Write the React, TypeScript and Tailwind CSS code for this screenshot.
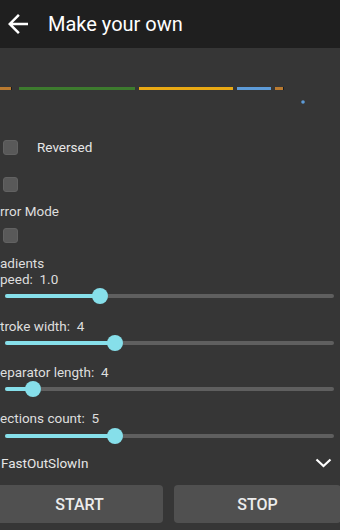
import React from "react";

const font = { fontFamily: "Roboto, 'Noto Sans', sans-serif" };

function Checkbox({ className = "" }: { className?: string }) {
  return (
    <div
      className={`ml-[3px] h-[15px] w-[15px] rounded-[3px] border border-[#626262] bg-[#595959] ${className}`}
    />
  );
}

function Slider({ thumb, className = "" }: { thumb: number; className?: string }) {
  // thumb = x position of the thumb centre on the page
  const active = thumb - 5;
  return (
    <div className={`relative ml-[5px] h-4 w-[329px] ${className}`}>
      <div className="absolute inset-x-0 top-[6px] h-[4px] rounded-full bg-[#5f5f5f]" />
      <div
        className="absolute left-0 top-[6px] h-[4px] rounded-l-full bg-[#86dfea]"
        style={{ width: active }}
      />
      <div
        className="absolute top-0 h-4 w-4 rounded-full bg-[#86dfea]"
        style={{ left: active - 8 }}
      />
    </div>
  );
}

function Label({ children, className = "" }: { children: React.ReactNode; className?: string }) {
  return (
    <div className={`h-4 whitespace-pre text-[13.5px] leading-4 text-[#dedede] ${className}`}>
      {children}
    </div>
  );
}

export default function App() {
  return (
    <div className="h-[530px] w-[340px] overflow-hidden bg-[#363636]" style={font}>
      <header className="flex h-12 items-center bg-[#1f1f1f]">
        <svg width="30" height="30" viewBox="0 0 24 24" className="ml-[3px]">
          <path
            d="M20 11H7.83l5.59-5.59L12 4l-8 8 8 8 1.41-1.41L7.83 13H20v-2z"
            fill="#ffffff"
          />
        </svg>
        <h1 className="ml-[15px] text-[20px] font-normal text-white">Make your own</h1>
      </header>

      <svg width="340" height="84" className="block">
        <rect x="0" y="39" width="11" height="3" fill="#b97a30" />
        <rect x="11" y="39" width="1" height="3" fill="#1c1c1c" />
        <rect x="19" y="39" width="116" height="3" fill="#3d7b2e" />
        <rect x="139" y="39" width="94" height="3" fill="#e9a914" />
        <rect x="237" y="39" width="34" height="3" fill="#5d9bd8" />
        <rect x="275" y="39" width="8" height="3" fill="#b97a30" />
        <rect x="283" y="39" width="1" height="3" fill="#1c1c1c" />
        <circle cx="303" cy="54" r="1.8" fill="#5d9bd8" />
      </svg>

      <div className="flex h-[30px] items-center">
        <Checkbox />
        <span className="ml-[19px] text-[13.5px] text-[#e6e6e6]">Reversed</span>
      </div>

      <Checkbox className="mt-[15px]" />
      <Label className="mt-[11px]">rror Mode</Label>
      <Checkbox className="mt-[9px]" />

      <Label className="mt-[12px]">adients</Label>
      <Label>{"peed:  1.0"}</Label>
      <Slider thumb={100} className="mt-[1px]" />

      <Label className="mt-[14px]">{"troke width:  4"}</Label>
      <Slider thumb={115} className="mt-[1px]" />

      <Label className="mt-[13px]">{"eparator length:  4"}</Label>
      <Slider thumb={33} className="mt-[1px]" />

      <Label className="mt-[13px]">{"ections count:  5"}</Label>
      <Slider thumb={115} className="mt-[2px]" />

      <div className="mt-[9px] flex h-5 items-center justify-between">
        <span className="pl-[1px] text-[13.5px] text-[#e6e6e6]">FastOutSlowIn</span>
        <svg width="17" height="10" viewBox="0 0 17 10" className="mr-[8px]">
          <polyline
            points="1.5,1.5 8.5,8 15.5,1.5"
            fill="none"
            stroke="#ffffff"
            strokeWidth="2.2"
          />
        </svg>
      </div>

      <div className="ml-[-4px] mt-[12px] flex gap-[11px]">
        <button className="h-[38px] w-[167px] shrink-0 rounded-[4px] bg-[#505050] pt-[2px] text-[16px] font-medium text-[#ececec]">
          START
        </button>
        <button className="h-[38px] w-[167px] shrink-0 rounded-[4px] bg-[#505050] pt-[2px] text-[16px] font-medium text-[#ececec]">
          STOP
        </button>
      </div>
    </div>
  );
}
